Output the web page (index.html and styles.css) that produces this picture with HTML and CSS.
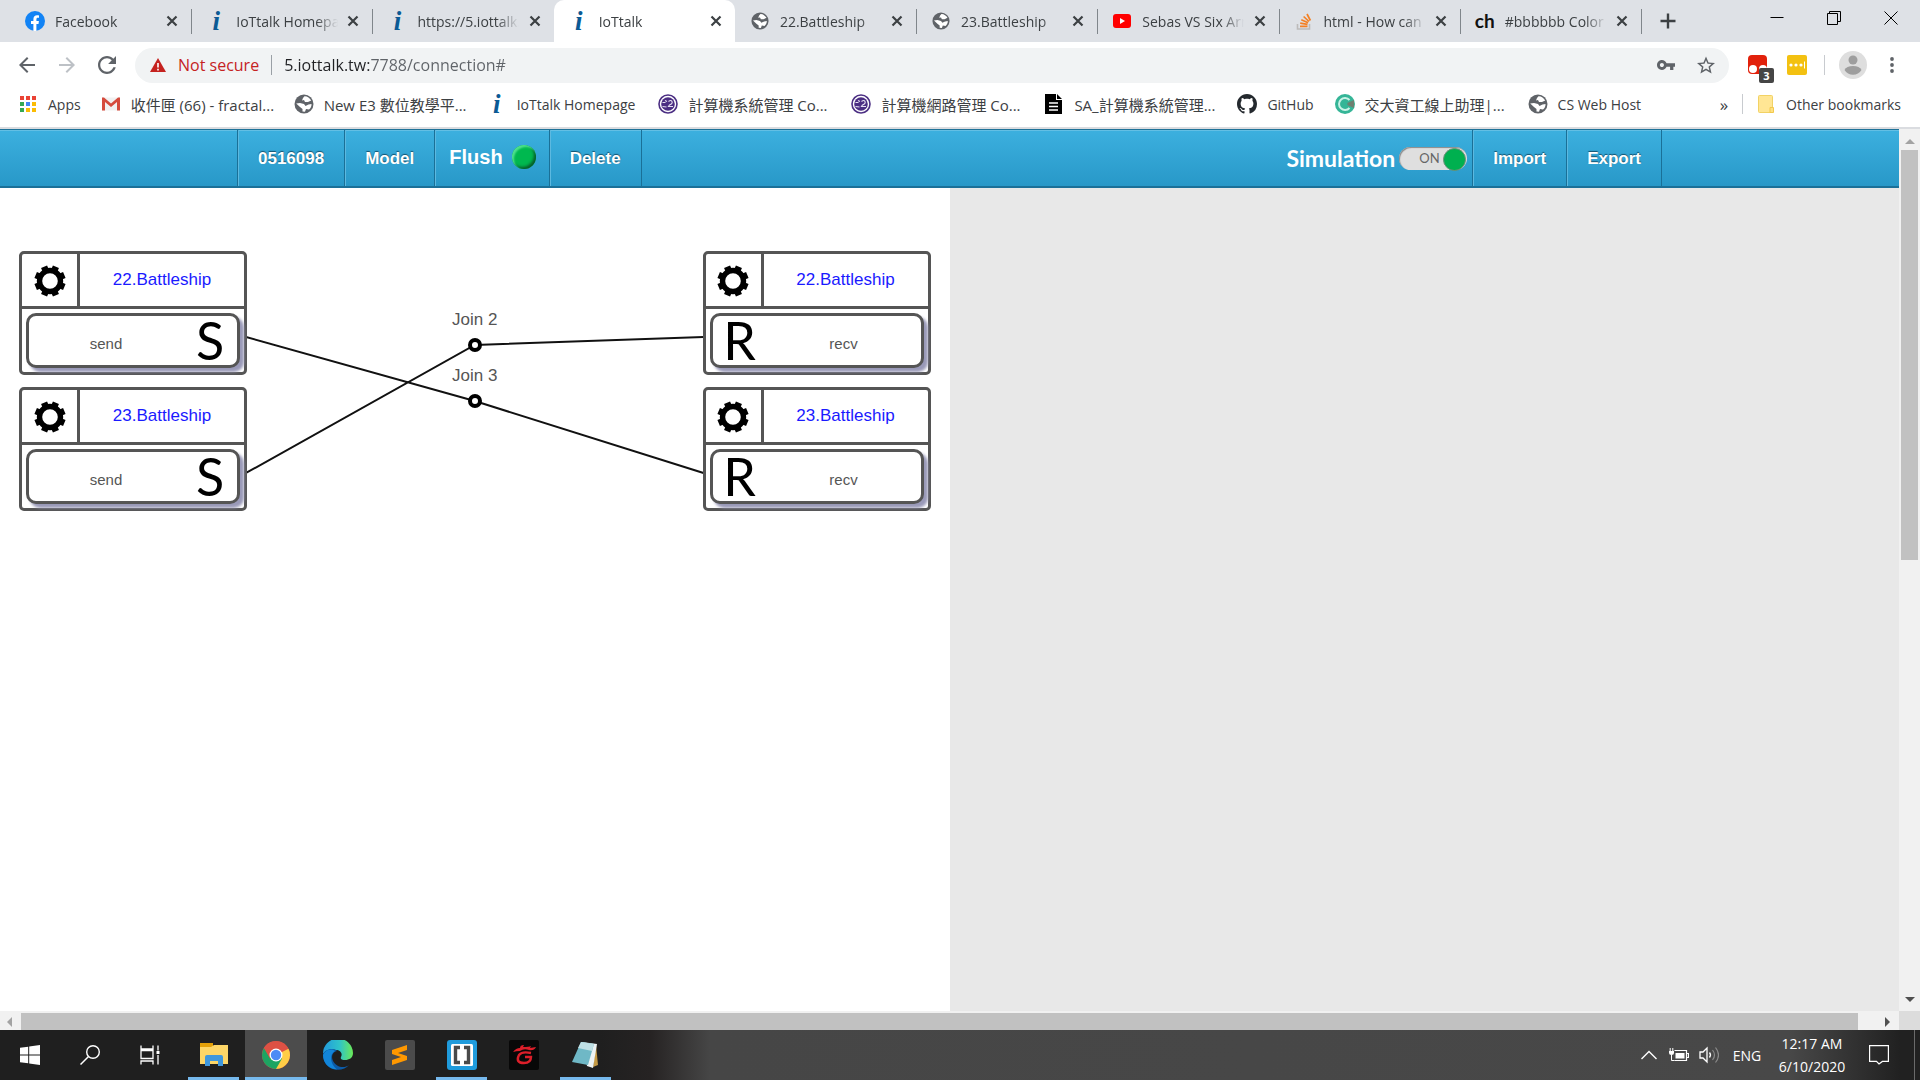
FILE: index.html
```html
<!DOCTYPE html>
<html lang="en">
<head>
<meta charset="utf-8">
<title>IoTtalk</title>
<link rel="stylesheet" href="styles.css">
</head>
<body>
<svg class="sprite" aria-hidden="true">
  <symbol id="x" viewBox="0 0 12 12"><path d="M1.5 1.5l9 9M10.5 1.5l-9 9" stroke="#3c4043" stroke-width="2.2" fill="none"/></symbol>
  <symbol id="globe" viewBox="0 0 20 20"><circle cx="10" cy="10" r="9.500" fill="#5f6368"/><path fill="#fff" d="M10.500 2.200C13 2 16 4 17.200 6.500L14 8h-3l-1-2-2 .500 1-2.500zM2.200 9.500L6 9l4 1 1.500 2 3-1.500 3-.500c.300 2-1 4.500-2.500 5.500L12 15l-1 2.800-2.500-.300V15L6 13z"/></symbol>
  <symbol id="course" viewBox="0 0 20 20"><circle cx="10" cy="10" r="9" fill="#fff" stroke="#4b2e83" stroke-width="1.600"/><circle cx="10" cy="10" r="6.800" fill="#4b2e83"/><path d="M4.500 8.500h3M7 6.500l2 1M4.500 12.500l4 .500M10.500 7.500q2.500-2 3.500 0t-2.500 3.500l-1 1.500h4.500" stroke="#e6e0f2" stroke-width="1.100" fill="none"/></symbol>
  <symbol id="gear" viewBox="-16 -16 32 32">
    <circle r="10.500" fill="none" stroke="#000" stroke-width="5.400"/>
    <g stroke="#000" stroke-width="6.500">
      <path d="M0-11V-15.500M0 11V15.500M11 0H15.500M-11 0H-15.500" transform="rotate(22.500)"/>
      <path d="M0-11V-15.500M0 11V15.500M11 0H15.500M-11 0H-15.500" transform="rotate(67.500)"/>
    </g>
  </symbol>
</svg>

<div class="window">
  <header class="tabstrip">
    <nav class="tabs" aria-label="Tabs">
      <div class="tab">
        <svg class="favicon" viewBox="0 0 20 20"><circle cx="10" cy="10" r="10" fill="#1283f5"/><path fill="#fff" d="M8.400 20v-7H6v-3h2.400V8c0-2.500 1.500-3.800 3.700-3.800.900 0 1.900.200 1.900.200v2.300h-1.100c-1.100 0-1.500.700-1.500 1.400V10h2.500l-.400 3h-2.100v7z"/></svg>
        <a href="#">Facebook</a><button aria-label="Close tab"><svg><use href="#x"/></svg></button>
      </div>
      <div class="tab"><span class="favicon info">i</span><a href="#">IoTtalk Homepage</a><button aria-label="Close tab"><svg><use href="#x"/></svg></button></div>
      <div class="tab last-before"><span class="favicon info">i</span><a href="#">https://5.iottalk.tw</a><button aria-label="Close tab"><svg><use href="#x"/></svg></button></div>
      <div class="tab active"><span class="favicon info">i</span><a href="#">IoTtalk</a><button aria-label="Close tab"><svg><use href="#x"/></svg></button></div>
      <div class="tab"><svg class="favicon globe"><use href="#globe"/></svg><a href="#">22.Battleship</a><button aria-label="Close tab"><svg><use href="#x"/></svg></button></div>
      <div class="tab"><svg class="favicon globe"><use href="#globe"/></svg><a href="#">23.Battleship</a><button aria-label="Close tab"><svg><use href="#x"/></svg></button></div>
      <div class="tab"><svg class="favicon" viewBox="0 0 20 20"><rect x="1" y="3" width="18" height="14" rx="3" fill="#f00"/><path d="M8 7l5 3-5 3z" fill="#fff"/></svg><a href="#">Sebas VS Six Arms</a><button aria-label="Close tab"><svg><use href="#x"/></svg></button></div>
      <div class="tab"><svg class="favicon" viewBox="0 0 20 20" fill="none"><path d="M3.500 13v5h12v-5" stroke="#bcbbbb" stroke-width="1.600"/><path d="M6 15.300h7.500M6.200 12.200l7.300 1.200M7.300 8.800l6.800 3M9.600 5.500l5.400 5M13 3l3.400 6.500" stroke="#f48024" stroke-width="1.700"/></svg><a href="#">html - How can I</a><button aria-label="Close tab"><svg><use href="#x"/></svg></button></div>
      <div class="tab"><span class="favicon ch">ch</span><a href="#">#bbbbbb Color</a><button aria-label="Close tab"><svg><use href="#x"/></svg></button></div>
    </nav>
    <div class="frame-controls">
      <button class="newtab" aria-label="New tab"><svg viewBox="0 0 16 16"><path d="M8 .500v15M.500 8h15" stroke="#3c4043" stroke-width="2.400"/></svg></button>
      <button aria-label="Minimize"><svg viewBox="0 0 14 14"><path d="M.500 6.500h13" stroke="#000"/></svg></button>
      <button aria-label="Restore"><svg viewBox="0 0 14 14"><path d="M.500 2.500h10v11h-10zM2.500 2.500v-2h11v10h-3" stroke="#000" fill="none"/></svg></button>
      <button aria-label="Close"><svg viewBox="0 0 14 14"><path d="M.500.500l13 13M13.500.500l-13 13" stroke="#000"/></svg></button>
    </div>
  </header>

  <div class="toolbar">
    <button aria-label="Back"><svg viewBox="4 4 16 16"><path fill="#5f6368" d="M20 11H7.830l5.590-5.590L12 4l-8 8 8 8 1.410-1.410L7.830 13H20v-2z"/></svg></button>
    <button aria-label="Forward"><svg viewBox="4 4 16 16"><path fill="#bdc1c6" d="M12 4l-1.410 1.410L16.170 11H4v2h12.170l-5.580 5.590L12 20l8-8z"/></svg></button>
    <button aria-label="Reload"><svg class="reload" viewBox="4 4 16 16"><path fill="#5f6368" d="M17.650 6.350C16.200 4.900 14.210 4 12 4c-4.420 0-7.990 3.580-7.990 8s3.570 8 7.990 8c3.730 0 6.840-2.550 7.730-6h-2.080c-.820 2.330-3.040 4-5.650 4-3.310 0-6-2.690-6-6s2.690-6 6-6c1.660 0 3.140.690 4.220 1.780L13 11h7V4l-2.350 2.350z"/></svg></button>
    <div class="omnibox">
      <svg class="warn" viewBox="0 0 16 14"><path d="M8 0l8 14H0z" fill="#c5221f"/><path d="M8 5v4.500M8 10.800v1.600" stroke="#fff" stroke-width="1.600"/></svg>
      <span class="notsecure">Not secure</span>
      <input class="url" type="text" aria-label="Address" value="5.iottalk.tw:7788/connection#">
      <button aria-label="Saved passwords"><svg class="key" viewBox="1 6 22 12"><path fill="#5f6368" fill-rule="evenodd" d="M12.650 10C11.830 7.670 9.610 6 7 6c-3.310 0-6 2.690-6 6s2.690 6 6 6c2.610 0 4.830-1.670 5.650-4H17v4h4v-4h2v-4H12.650zM7 14.500c-1.380 0-2.500-1.120-2.500-2.500S5.620 9.500 7 9.500 9.500 10.620 9.500 12 8.380 14.500 7 14.500z"/></svg></button>
      <button aria-label="Bookmark"><svg viewBox="2 2 20 19"><path fill="#5f6368" d="M22 9.240l-7.190-.620L12 2 9.190 8.630 2 9.240l5.460 4.730L5.820 21 12 17.270 18.180 21l-1.630-7.030L22 9.240zM12 15.400l-3.760 2.270 1-4.280-3.320-2.880 4.380-.380L12 6.100l1.710 4.040 4.380.380-3.320 2.880 1 4.280L12 15.400z"/></svg></button>
    </div>
    <button class="ext" aria-label="Tampermonkey, 3 scripts">
      <svg viewBox="0 0 20 20"><rect width="19" height="19" rx="4" fill="#e2210b"/><circle cx="5" cy="14" r="4" fill="#fff"/><circle cx="15" cy="14" r="4" fill="#fff"/></svg>
      <span class="badge">3</span>
    </button>
    <button class="ext" aria-label="Password manager"><svg viewBox="0 0 20 20"><rect width="20" height="20" rx="2" fill="#f3c111"/><g fill="#fff"><circle cx="4" cy="10" r="1.600"/><circle cx="9" cy="10" r="1.600"/><circle cx="14" cy="10" r="1.600"/><path d="M17 6.500h1v7h-1z"/></g></svg></button>
    <span class="divider"></span>
    <button class="profile" aria-label="Profile"><svg viewBox="0 0 28 28"><circle cx="14" cy="14" r="14" fill="#dedede"/><g fill="#9e9e9e"><circle cx="14" cy="9" r="4.500"/><path d="M5.500 19q2-4 8.500-4t8.500 4q-3 4.800-8.500 4.800T5.500 19z"/></g></svg></button>
    <button class="more" aria-label="Menu"><svg viewBox="0 0 4 16"><g fill="#5f6368"><circle cx="2" cy="2" r="1.900"/><circle cx="2" cy="8" r="1.900"/><circle cx="2" cy="14" r="1.900"/></g></svg></button>
  </div>

  <nav class="bookmarks" aria-label="Bookmarks">
    <a href="#" class="apps"><svg viewBox="0 0 20 20"><path fill="#ea4335" d="M2 2h4v4H2zM8 2h4v4H8zM14 2h4v4h-4z"/><path fill="#34a853" d="M2 8h4v4H2zM2 14h4v4H2z"/><path fill="#4285f4" d="M8 8h4v4H8z"/><path fill="#fbbc04" d="M14 8h4v4h-4zM8 14h4v4H8zM14 14h4v4h-4z"/></svg>Apps</a>
    <a href="#" class="wide"><svg viewBox="0 0 20 20"><path fill="#f1f1f1" d="M1 3.500h18v13H1z"/><path fill="#d54b3d" d="M1 3.500h2l7 6 7-6h2v13h-3V8l-6 5-6-5v8.500H1z"/></svg>收件匣 (66) - fractal...</a>
    <a href="#" class="wide"><svg><use href="#globe"/></svg>New E3 數位教學平...</a>
    <a href="#" class="plain"><span class="info">i</span>IoTtalk Homepage</a>
    <a href="#" class="wide"><svg><use href="#course"/></svg>計算機系統管理 Co...</a>
    <a href="#" class="wide"><svg><use href="#course"/></svg>計算機網路管理 Co...</a>
    <a href="#" class="wide"><svg viewBox="0 0 20 20"><path d="M1 0h11v6h6v14H1zM13 0l5 5h-5z"/><path d="M5 9h9M5 12.500h9M5 16h9" stroke="#fff" stroke-width="1.300"/></svg>SA_計算機系統管理...</a>
    <a href="#"><svg viewBox="0 0 16 16"><path fill="#24292e" fill-rule="evenodd" d="M8 0C3.580 0 0 3.580 0 8c0 3.540 2.290 6.530 5.470 7.590.400.070.550-.170.550-.380 0-.190-.010-.820-.010-1.490-2.010.370-2.530-.490-2.690-.940-.090-.230-.480-.940-.820-1.130-.280-.150-.680-.520-.010-.530.630-.010 1.080.580 1.230.820.720 1.210 1.870.870 2.330.660.070-.520.280-.870.510-1.070-1.780-.200-3.640-.890-3.640-3.950 0-.870.310-1.590.820-2.150-.080-.200-.360-1.020.080-2.120 0 0 .670-.210 2.200.820.640-.180 1.320-.270 2-.270s1.360.090 2 .270c1.530-1.040 2.200-.820 2.200-.820.440 1.100.160 1.920.080 2.120.510.560.820 1.270.820 2.150 0 3.070-1.870 3.750-3.650 3.950.290.250.540.730.540 1.480 0 1.070-.010 1.930-.010 2.200 0 .210.150.460.550.380A8.010 8.010 0 0016 8c0-4.420-3.580-8-8-8z"/></svg>GitHub</a>
    <a href="#" class="wide"><svg viewBox="0 0 20 20"><circle cx="10" cy="10" r="10" fill="#35b597"/><path d="M10 10l9-4v8z" fill="#6f7f70"/><path d="M14.500 6A6 6 0 1 0 14.500 14" fill="none" stroke="#c9f2e6" stroke-width="2"/><circle cx="10" cy="10" r="2.500" fill="#35b597"/></svg>交大資工線上助理|...</a>
    <a href="#" class="plain"><svg><use href="#globe"/></svg>CS Web Host</a>
    <button class="overflow" aria-label="More bookmarks">»</button>
    <span class="divider"></span>
    <a href="#" class="other"><svg viewBox="0 0 20 20"><rect x="2.500" y="1.500" width="14" height="17" rx="1" fill="#ffe694" stroke="#f2d264"/><path d="M14 18.500v-5h3.500v5z" fill="#ffe082" stroke="#f2c94c"/></svg>Other bookmarks</a>
  </nav>

  <div class="viewport">
    <div class="page">
      <nav class="menu">
        <a href="#">0516098</a>
        <a href="#">Model</a>
        <a href="#" class="flush">Flush <span class="led"></span></a>
        <a href="#" class="end">Delete</a>
        <label class="simulation">Simulation
          <span class="switch"><input type="checkbox" checked><span class="on">ON</span></span>
        </label>
        <a href="#">Import</a>
        <a href="#" class="end">Export</a>
      </nav>
      <main class="work">
        <section class="canvas">
          <svg class="links" viewBox="0 0 456 330" preserveAspectRatio="none">
            <path d="M0 149L228 213L456 285M0 285L228 157L456 149" fill="none" stroke="#111" stroke-width="2" vector-effect="non-scaling-stroke"/>
          </svg>
          <article class="device out first">
            <header><button aria-label="Settings"><svg><use href="#gear"/></svg></button><a href="#">22.Battleship</a></header>
            <button class="feature"><span>send</span><b>S</b></button>
          </article>
          <article class="device out second">
            <header><button aria-label="Settings"><svg><use href="#gear"/></svg></button><a href="#">23.Battleship</a></header>
            <button class="feature"><span>send</span><b>S</b></button>
          </article>
          <article class="device in first">
            <header><button aria-label="Settings"><svg><use href="#gear"/></svg></button><a href="#">22.Battleship</a></header>
            <button class="feature"><b>R</b><span>recv</span></button>
          </article>
          <article class="device in second">
            <header><button aria-label="Settings"><svg><use href="#gear"/></svg></button><a href="#">23.Battleship</a></header>
            <button class="feature"><b>R</b><span>recv</span></button>
          </article>
          <div class="join join-2">Join 2<i></i></div>
          <div class="join join-3">Join 3<i></i></div>
        </section>
        <aside class="panel"></aside>
      </main>
    </div>
    <div class="vbar"><svg viewBox="0 0 10 6"><path d="M0 6l5-5 5 5z" fill="#a3a3a3"/></svg><span class="thumb"></span><svg viewBox="0 0 10 6"><path d="M0 0l5 5 5-5z" fill="#505050"/></svg></div>
    <div class="hbar"><svg viewBox="0 0 6 10"><path d="M6 0L1 5l5 5z" fill="#a3a3a3"/></svg><span class="thumb"></span><svg viewBox="0 0 6 10"><path d="M0 0l5 5-5 5z" fill="#505050"/></svg></div>
    <div class="corner"></div>
  </div>

  <footer class="taskbar">
    <button class="sys" aria-label="Start"><svg viewBox="0 0 20 20"><path fill="#fff" d="M0 2.800L8.200 1.700v7.800H0zM9.200 1.500L20 0v9.500H9.200zM0 10.500h8.200v7.800L0 17.200zM9.200 10.500H20V20L9.200 18.500z"/></svg></button>
    <button class="sys" aria-label="Search"><svg viewBox="0 0 20 20"><circle cx="13" cy="7" r="6.300" fill="none" stroke="#fff" stroke-width="1.400"/><path d="M8.500 11.500L.500 19.500" stroke="#fff" stroke-width="1.500"/></svg></button>
    <button class="sys" aria-label="Task view"><svg viewBox="0 0 20 20"><g fill="none" stroke="#fff" stroke-width="1.300"><path d="M1 .500v3.500h12V.500M1 5.500h12v8H1zM1 19.500V16h12v3.500M18 .500v5M18 10v9.500"/></g><path d="M16.500 6h3v3h-3z" fill="#fff"/></svg></button>
    <button class="app running first-app" aria-label="File Explorer"><svg viewBox="0 0 30 30"><path d="M1 3h13v5H1z" fill="#e3a008"/><path d="M1 7h11l3-2h14v19H1z" fill="#fdd667"/><path d="M6 26V17q0-2 2-2h14q2 0 2 2v9h-5v-5h-8v5z" fill="#3f97dc"/></svg></button>
    <button class="app running current" aria-label="Google Chrome"><svg viewBox="0 0 30 30"><circle cx="15" cy="15" r="14" fill="#dd5144"/><path d="M15 15l12.500-6.300A14 14 0 0 1 15 29l-1-1z" fill="#ffcd46"/><path d="M15 15L2.900 8A14 14 0 0 0 15 29l6-10.500z" fill="#1da462"/><path d="M2.900 8l6 10.500L15 8.500h12.200A14 14 0 0 0 2.900 8z" fill="#dd5144"/><circle cx="15" cy="15" r="6.500" fill="#fff"/><circle cx="15" cy="15" r="5.200" fill="#4c8bf5"/></svg></button>
    <button class="app" aria-label="Microsoft Edge"><svg viewBox="0 0 30 30"><defs><linearGradient id="edge-top" x2="1"><stop stop-color="#2199dd"/><stop offset=".550" stop-color="#2fc3c9"/><stop offset="1" stop-color="#6bea57"/></linearGradient></defs><path d="M0 14A15 15 0 0 1 30 13c0 5-4 7-8 7-3 0-5-1-4-3 2-4-1-7-5-7C7 9 1 12 0 14z" fill="url(#edge-top)"/><path d="M0 14C3 8 12 8 14 11c-5 1-6 6-4 10 3 6 11 8 16 4-6 8-26 7-26-11z" fill="#0c5ba8"/><path d="M0 15C2 10 8 8 12 11c-6 3-5 13 2 18.500C5 29 0 22 0 15z" fill="#1285d9"/></svg></button>
    <button class="app" aria-label="Sublime Text"><svg viewBox="0 0 30 30"><rect width="30" height="30" rx="2" fill="#4b4b4b"/><path d="M7 10l15-5v5l-9 3 9 3v4L7 25v-5l9-3-9-3z" fill="#ff9800"/></svg></button>
    <button class="app running" aria-label="Brackets"><svg viewBox="0 0 30 30"><rect width="30" height="30" rx="3" fill="#1f9bdc"/><rect x="4" y="4" width="22" height="22" rx="1.500" fill="#fff"/><path d="M13 7.500H8.500v15H13M17 7.500h4.500v15H17" fill="none" stroke="#4a4a4a" stroke-width="3.400"/></svg></button>
    <button class="app" aria-label="Garena"><svg viewBox="0 0 30 30"><rect width="30" height="30" rx="2" fill="#080808"/><path d="M4 12q3-4 7-4 0-3 4-3l-1 2q6 0 8-1l-1 2 6-1q-2 4-7 3-5-2-9 1-4 0-7 1z" fill="#dc1f2a"/><path d="M22 13q-9-2-12 2-4 8 5 8 7 0 7-6h-6" fill="none" stroke="#dc1f2a" stroke-width="2.400"/></svg></button>
    <button class="app running" aria-label="Notepad"><svg viewBox="0 0 30 30"><path d="M25 5l2 20-5 2z" fill="#c49a45"/><path d="M11 2l15 2-4 24-6-2z" fill="#edf3f4"/><path d="M10 2l13 2-6 21L1 22z" fill="#6fb8c6"/><path d="M10 2l13 2-2 7L7 8z" fill="#bfe0e5"/></svg></button>
    <div class="tray">
      <button aria-label="Show hidden icons"><svg class="chev" viewBox="0 0 16 10"><path d="M.500 9L8 1.500 15.500 9" fill="none" stroke="#fff" stroke-width="1.400"/></svg></button>
      <button aria-label="Battery"><svg class="bat" viewBox="0 0 20 14"><path d="M5.500 2.500h12v10h-12M18 5.500h1.500v4H18" fill="none" stroke="#fff" stroke-width="1.200"/><path d="M6.500 5h9v5.500h-9zM0 3h5v2q0 2-2.500 2T0 5z" fill="#fff"/><path d="M1.200 0v3M3.800 0v3M2.500 7v5.500h3" stroke="#fff" fill="none"/></svg></button>
      <button aria-label="Volume"><svg class="vol" viewBox="0 0 20 18"><path d="M1 6h3l4-4v14l-4-4H1z" fill="none" stroke="#fff" stroke-width="1.300"/><path d="M10.500 6.500q2 2.500 0 5" stroke="#fff" fill="none" stroke-width="1.300"/><path d="M13.500 4q4 5 0 10M16.500 1.500q6 7.500 0 15" stroke="#8a8a8a" fill="none" stroke-width="1.200"/></svg></button>
      <button class="lang">ENG</button>
      <button class="clock"><span>12:17 AM</span><span>6/10/2020</span></button>
      <button class="notes" aria-label="Notifications"><svg viewBox="0 0 20 20"><path d="M.600.600h18.800v15.800h-6L10 19l-2.500-2.600H.600z" fill="none" stroke="#fff" stroke-width="1.200"/></svg></button>
      <span class="peek"></span>
    </div>
  </footer>
</div>
</body>
</html>
```
FILE: styles.css
```css
* { box-sizing: border-box; }

body {
  margin: 0;
  font-family: "Open Sans", "Noto Sans CJK TC", sans-serif;
  font-size: 14px;
  color: #3c4043;
}

a { color: inherit; text-decoration: none; }

button {
  display: flex;
  align-items: center;
  justify-content: center;
  padding: 0;
  border: 0;
  background: none;
  color: inherit;
  font: inherit;
}

svg { display: block; flex: none; }
.sprite { position: absolute; width: 0; height: 0; }

.window { display: flex; flex-direction: column; min-height: 100vh; background: #fff; }

/* tab strip */
.tabstrip { display: flex; height: 42px; background: #dee1e6; }
.tabs { display: flex; flex: 1; min-width: 0; padding-left: 10px; }
.tab {
  position: relative;
  display: flex;
  flex: 1 1 0;
  align-items: center;
  min-width: 0;
  padding: 0 11px 0 15px;
}
.tab::after {
  content: "";
  position: absolute;
  right: -1px;
  top: 9px;
  width: 1px;
  height: 25px;
  background: #80868b;
}
.tab.active { background: #fff; border-radius: 10px 10px 0 0; }
.tab.active::after, .tab.last-before::after { display: none; }
.tab a {
  flex: 1;
  min-width: 0;
  margin-left: 10px;
  overflow: hidden;
  white-space: nowrap;
  -webkit-mask-image: linear-gradient(90deg, #000 80px, transparent 102px);
  mask-image: linear-gradient(90deg, #000 80px, transparent 102px);
}
.tab button { width: 16px; height: 16px; margin-left: 4px; }
.tab button svg { width: 12px; height: 12px; }
.favicon { width: 20px; height: 20px; flex: none; }
.favicon.globe { padding: 1px; }
.info {
  font: italic bold 27px/20px "Liberation Serif", serif;
  color: #0b5a94;
  text-align: center;
}
.ch { font: bold 19px/20px Lato, sans-serif; color: #111; }

.frame-controls { display: flex; width: 279px; padding-right: 1px; }
.frame-controls button { width: 57px; height: 36px; }
.frame-controls svg { width: 14px; height: 14px; }
.frame-controls .newtab { width: 54px; height: 42px; margin-right: auto; }
.frame-controls .newtab svg { width: 16px; height: 16px; }

/* toolbar */
.toolbar { display: flex; align-items: center; height: 46px; padding: 0 14px 0 7px; }
.toolbar > button { width: 40px; height: 35px; }
.toolbar > button svg { width: 16px; height: 16px; }
.toolbar > button .reload { width: 18px; height: 18px; }
.omnibox {
  display: flex;
  flex: 1;
  align-items: center;
  height: 35px;
  margin-left: 8px;
  padding: 0 12px 0 15px;
  border-radius: 18px;
  background: #f1f3f4;
  font-size: 16px;
}
.warn { width: 16px; height: 14px; }
.notsecure { margin-left: 12px; padding-right: 12px; border-right: 1px solid #9aa0a6; color: #c5221f; line-height: 20px; }
.url {
  flex: 1;
  min-width: 0;
  height: 24px;
  margin-left: 12px;
  padding: 0;
  border: 0;
  outline: 0;
  font: inherit;
  color: transparent;
  background: linear-gradient(90deg, #202124 86px, #5f6368 86px);
  -webkit-background-clip: text;
  background-clip: text;
}
.omnibox button { width: 22px; margin-left: 18px; }
.omnibox button svg { width: 18px; height: 18px; }
.omnibox .key { height: 12px; }
.toolbar > .ext { position: relative; width: 20px; margin-left: 19px; }
.toolbar > .ext svg { width: 20px; height: 20px; }
.badge {
  position: absolute;
  left: 11px;
  bottom: 0;
  width: 15px;
  height: 15px;
  border-radius: 2px;
  background: #454545;
  color: #fff;
  font-size: 11px;
  font-weight: 700;
  line-height: 15px;
}
.divider { width: 1px; height: 20px; background: #c8cbcf; }
.toolbar .divider { margin-left: 17px; }
.toolbar > .profile { width: 28px; margin-left: 14px; }
.toolbar > .profile svg { width: 28px; height: 28px; }
.toolbar > .more { width: 28px; margin-left: 11px; }
.toolbar > .more svg { width: 4px; }

/* bookmarks */
.bookmarks {
  display: flex;
  align-items: center;
  height: 41px;
  padding: 0 19px 7px 18px;
  border-bottom: 2px solid #dadce0;
  white-space: nowrap;
}
.bookmarks a { display: flex; align-items: center; gap: 10px; margin-right: 21px; }
.bookmarks a svg, .bookmarks .info { width: 20px; height: 20px; flex: none; }
.bookmarks a.apps { margin-right: 20px; }
.bookmarks a.wide { width: 172px; font-size: 15px; }
.bookmarks a.plain { margin-right: 23px; }
.bookmarks .overflow { margin-left: auto; width: 20px; font-size: 17px; }
.bookmarks .divider { margin: 0 13px 0 8px; }
.bookmarks a.other { margin-right: 0; }

/* scrolled page */
.viewport { display: grid; flex: 1; grid-template: 1fr 19px / 1fr 21px; }
.page { display: flex; flex-direction: column; min-width: 0; }
.menu {
  display: flex;
  height: 59px;
  padding: 0 237px;
  border-top: 1px solid #1f7298;
  border-bottom: 2px solid #1b7098;
  background: linear-gradient(#3cb0df, #2898c8);
  box-shadow: inset 0 1px #63bfe4;
  color: #fff;
  font: bold 17px/1 "Liberation Sans", sans-serif;
}
.menu a {
  display: flex;
  align-items: center;
  padding: 0 20px;
  border-left: 1px solid #1a7097;
  box-shadow: inset 1px 0 #5cb9e0;
  text-shadow: 0 -1px 1px #14506c;
}
.menu a.end { border-right: 1px solid #1a7097; }
.menu a.flush { gap: 9px; padding: 0 13px 2px 14px; font-size: 20px; text-shadow: none; }
.led {
  width: 24px;
  height: 24px;
  border-radius: 50%;
  background: #00b84f;
  box-shadow: inset 2px 2px 2px #4fe08e, inset -2px -2px 3px #065c2a;
}
.simulation {
  display: flex;
  align-items: center;
  gap: 4px;
  margin-left: auto;
  padding-right: 5px;
  font: bold 23px/1 Lato, sans-serif;
}
.switch { display: grid; align-items: center; }
.switch > * { grid-area: 1 / 1; }
.switch input {
  display: flex;
  justify-content: flex-end;
  appearance: none;
  width: 68px;
  height: 23px;
  margin: 0;
  padding: 1px;
  border-radius: 12px;
  background: #dfdfdf;
  box-shadow: inset 1px 1px 1px #8a8a8a;
}
.switch input::before {
  content: "";
  width: 21px;
  height: 21px;
  border: 1px solid #6c8f78;
  border-radius: 50%;
  background: #00b04f;
}
.on { padding-left: 20px; color: #666; font: 13px/1 Lato, sans-serif; pointer-events: none; }

.work { display: grid; flex: 1; grid-template-columns: 1fr 1fr; }
.panel { background: #e8e8e8; }
.canvas { position: relative; min-height: 340px; font-family: "Liberation Sans", sans-serif; font-size: 17px; color: #555; }
.links { position: absolute; left: 246px; top: 0; width: calc(100% - 492px); height: 330px; }

.device {
  position: absolute;
  width: 228px;
  border: 3px solid #555;
  border-radius: 5px;
  background: #fff;
}
.device.out { left: 19px; }
.device.in { right: 19px; }
.device.first { top: 63px; }
.device.second { top: 199px; }
.device header { display: flex; height: 55px; border-bottom: 3px solid #555; }
.device header button { width: 58px; border-right: 3px solid #555; }
.device header svg { width: 32px; height: 32px; margin-top: 2px; }
.device header a { flex: 1; line-height: 52px; text-align: center; color: #1a1aff; }
.feature {
  width: 214px;
  height: 55px;
  margin: 4px;
  border: 3px solid #555;
  border-radius: 10px;
  box-shadow: 4px 4px 3px #9999b8;
  background: #fff;
  color: #555;
  font-size: 15px;
}
.feature span { flex: 1; padding-top: 5px; text-align: center; }
.feature b { width: 54px; padding-bottom: 2px; color: #000; font: 52px/46px Lato, sans-serif; }

.join {
  position: absolute;
  left: 50%;
  display: flex;
  flex-direction: column;
  align-items: center;
  gap: 8px;
  width: 80px;
  margin-left: -40px;
  line-height: 20px;
}
.join i { width: 14px; height: 14px; border: 4px solid #000; border-radius: 50%; background: #fff; }
.join-2 { top: 122px; }
.join-3 { top: 178px; }

/* scroll bars */
.vbar, .hbar { display: flex; align-items: center; background: #f1f1f1; }
.vbar { flex-direction: column; justify-content: space-between; padding: 9px 0 8px; }
.vbar svg { width: 10px; height: 6px; }
.vbar .thumb { width: 17px; height: 410px; margin: 6px 0 auto; background: #c1c1c1; }
.hbar { padding: 2px 8px 0 6px; }
.hbar svg { width: 6px; height: 10px; }
.hbar .thumb { flex: 1; height: 17px; margin: 0 27px 0 9px; background: #c1c1c1; }
.corner { background: #dcdcdc; }

/* taskbar */
.taskbar {
  display: flex;
  height: 50px;
  background: linear-gradient(90deg, #1f1f1f 600px, #262323 650px, #464646 710px, #484848 calc(100% - 130px), #212121 calc(100% - 20px));
  color: #fff;
}
.sys { width: 60px; }
.sys svg { width: 20px; height: 20px; }
.app { width: 62px; border-top: 3px solid transparent; border-bottom: 3px solid transparent; }
.first-app { margin-left: 3px; }
.app svg { width: 30px; height: 30px; }
.running { position: relative; }
.running::after { content: ""; position: absolute; left: 5px; right: 6px; bottom: -3px; height: 3px; background: #76b9ed; }
.current { background: #4c4c4c; border-top-color: #4c4c4c; }
.current::after { left: 0; right: 0; }
.tray { display: flex; margin-left: auto; font-size: 14px; }
.tray button { width: 30px; }
.chev { width: 16px; height: 10px; }
.bat { width: 20px; height: 14px; }
.vol { width: 20px; height: 18px; }
.tray .lang { width: 46px; }
.tray .clock { flex-direction: column; width: 84px; line-height: 23px; }
.tray .notes { width: 50px; }
.notes svg { width: 20px; height: 20px; }
.peek { width: 6px; margin-left: 10px; border-left: 1px solid #6a6a6a; }
```
